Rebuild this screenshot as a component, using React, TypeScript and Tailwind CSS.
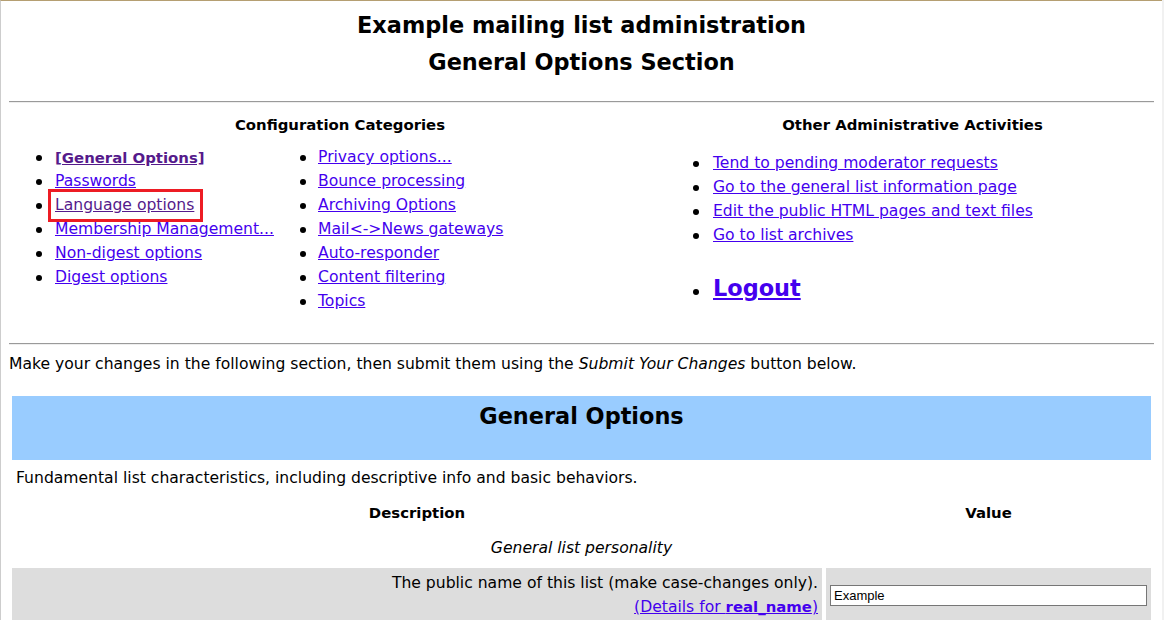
import React from 'react';

const LINK = 'text-[#4400ee] underline';
const VISITED = 'text-[#551a8b] underline';

const Bullet: React.FC<{ className?: string }> = ({ className = '' }) => (
  <span className={`inline-block w-[6px] h-[6px] rounded-full bg-black shrink-0 ${className}`} />
);

const leftA = ['Passwords', 'Language options', 'Membership Management...', 'Non-digest options', 'Digest options'];
const leftB = [
  'Privacy options...',
  'Bounce processing',
  'Archiving Options',
  'Mail<->News gateways',
  'Auto-responder',
  'Content filtering',
  'Topics',
];
const other = [
  'Tend to pending moderator requests',
  'Go to the general list information page',
  'Edit the public HTML pages and text files',
  'Go to list archives',
];

const App: React.FC = () => {
  return (
    <div className="flex min-h-[620px] w-[1164px] bg-white font-['DejaVu_Sans',sans-serif] text-[15.6px] text-black">
      <div className="flex-1 border-t border-l border-t-[#b59f72] border-l-[#cdcdcd] px-[8px]">
        {/* Titles */}
        <div className="pt-[9px] text-center font-bold text-[22.4px]">
          <div className="leading-[30px]">Example mailing list administration</div>
          <div className="mt-[7px] leading-[30px]">General Options Section</div>
        </div>
        <div className="mt-[24px] border-t border-b border-t-[#9a9a9a] border-b-[#eeeeee]" />

        {/* Categories + other activities */}
        <div className="flex">
          <div className="w-[662px]">
            <div className="mt-[10px] h-[24px] leading-[24px] text-center font-bold text-[14.9px]">
              Configuration Categories
            </div>
            <div className="mt-[9px] flex">
              <ul className="w-[291px] pl-[27px]">
                <li className="flex h-[24px] items-center whitespace-nowrap">
                  <Bullet className="mr-[13px]" />
                  <span className={`${VISITED} font-bold text-[14.9px]`}>[General Options]</span>
                </li>
                {leftA.map((t) => (
                  <li key={t} className="flex h-[24px] items-center whitespace-nowrap">
                    <Bullet className="mr-[13px]" />
                    {t === 'Language options' ? (
                      <span className="relative">
                        <span className={VISITED}>{t}</span>
                        <span className="absolute left-[-7px] right-[-9px] top-[-5px] bottom-[-4px] border-[3px] border-[#ed1c24]" />
                      </span>
                    ) : (
                      <span className={LINK}>{t}</span>
                    )}
                  </li>
                ))}
              </ul>
              <ul>
                {leftB.map((t) => (
                  <li key={t} className="flex h-[24px] items-center whitespace-nowrap">
                    <Bullet className="mr-[12px]" />
                    <span className={LINK}>{t}</span>
                  </li>
                ))}
              </ul>
            </div>
          </div>

          <div className="flex-1">
            <div className="mt-[10px] h-[24px] leading-[24px] text-center font-bold text-[14.9px]">
              Other Administrative Activities
            </div>
            <ul className="mt-[15px] pl-[22px]">
              {other.map((t) => (
                <li key={t} className="flex h-[24px] items-center whitespace-nowrap">
                  <Bullet className="mr-[14px]" />
                  <span className={LINK}>{t}</span>
                </li>
              ))}
              <li className="mt-[26px] flex h-[30px] items-center">
                <Bullet className="mr-[14px] mt-[6px]" />
                <span className={`${LINK} font-bold text-[22.4px]`}>Logout</span>
              </li>
            </ul>
          </div>
        </div>

        <div className="mt-[29px] border-t border-b border-t-[#9a9a9a] border-b-[#eeeeee]" />

        <p className="mt-[7px] leading-[24px]">
          Make your changes in the following section, then submit them using the{' '}
          <em>Submit Your Changes</em> button below.
        </p>

        {/* Options table */}
        <div className="mt-[20px] px-[3px]">
          <div className="h-[64px] bg-[#99ccff] pt-[7px] text-center font-bold text-[22.4px] leading-[26px]">
            General Options
          </div>
          <div className="mt-[6px] pl-[4px] leading-[24px]">
            Fundamental list characteristics, including descriptive info and basic behaviors.
          </div>
          <div className="mt-[11px] flex gap-[4px] font-bold text-[14.9px] leading-[24px]">
            <div className="w-[810px] text-center">Description</div>
            <div className="flex-1 text-center">Value</div>
          </div>
          <div className="mt-[11px] text-center italic leading-[24px]">General list personality</div>
          <div className="mt-[8px] flex gap-[4px]">
            <div className="w-[810px] bg-[#dddddd] py-[3px] pr-[4px] text-right leading-[24px]">
              <div>The public name of this list (make case-changes only).</div>
              <div>
                <span className={LINK}>
                  (Details for <strong className="text-[14.9px]">real_name</strong>)
                </span>
              </div>
            </div>
            <div className="flex flex-1 items-center bg-[#dddddd] px-[4px]">
              <input
                type="text"
                defaultValue="Example"
                className="h-[21px] w-full border border-[#767676] bg-white px-[3px] font-['Liberation_Sans',Arial,sans-serif] text-[13px] text-black outline-none"
              />
            </div>
          </div>
        </div>
      </div>
      <div className="w-[2px] bg-[#f1f1f1]" />
    </div>
  );
};

export default App;
